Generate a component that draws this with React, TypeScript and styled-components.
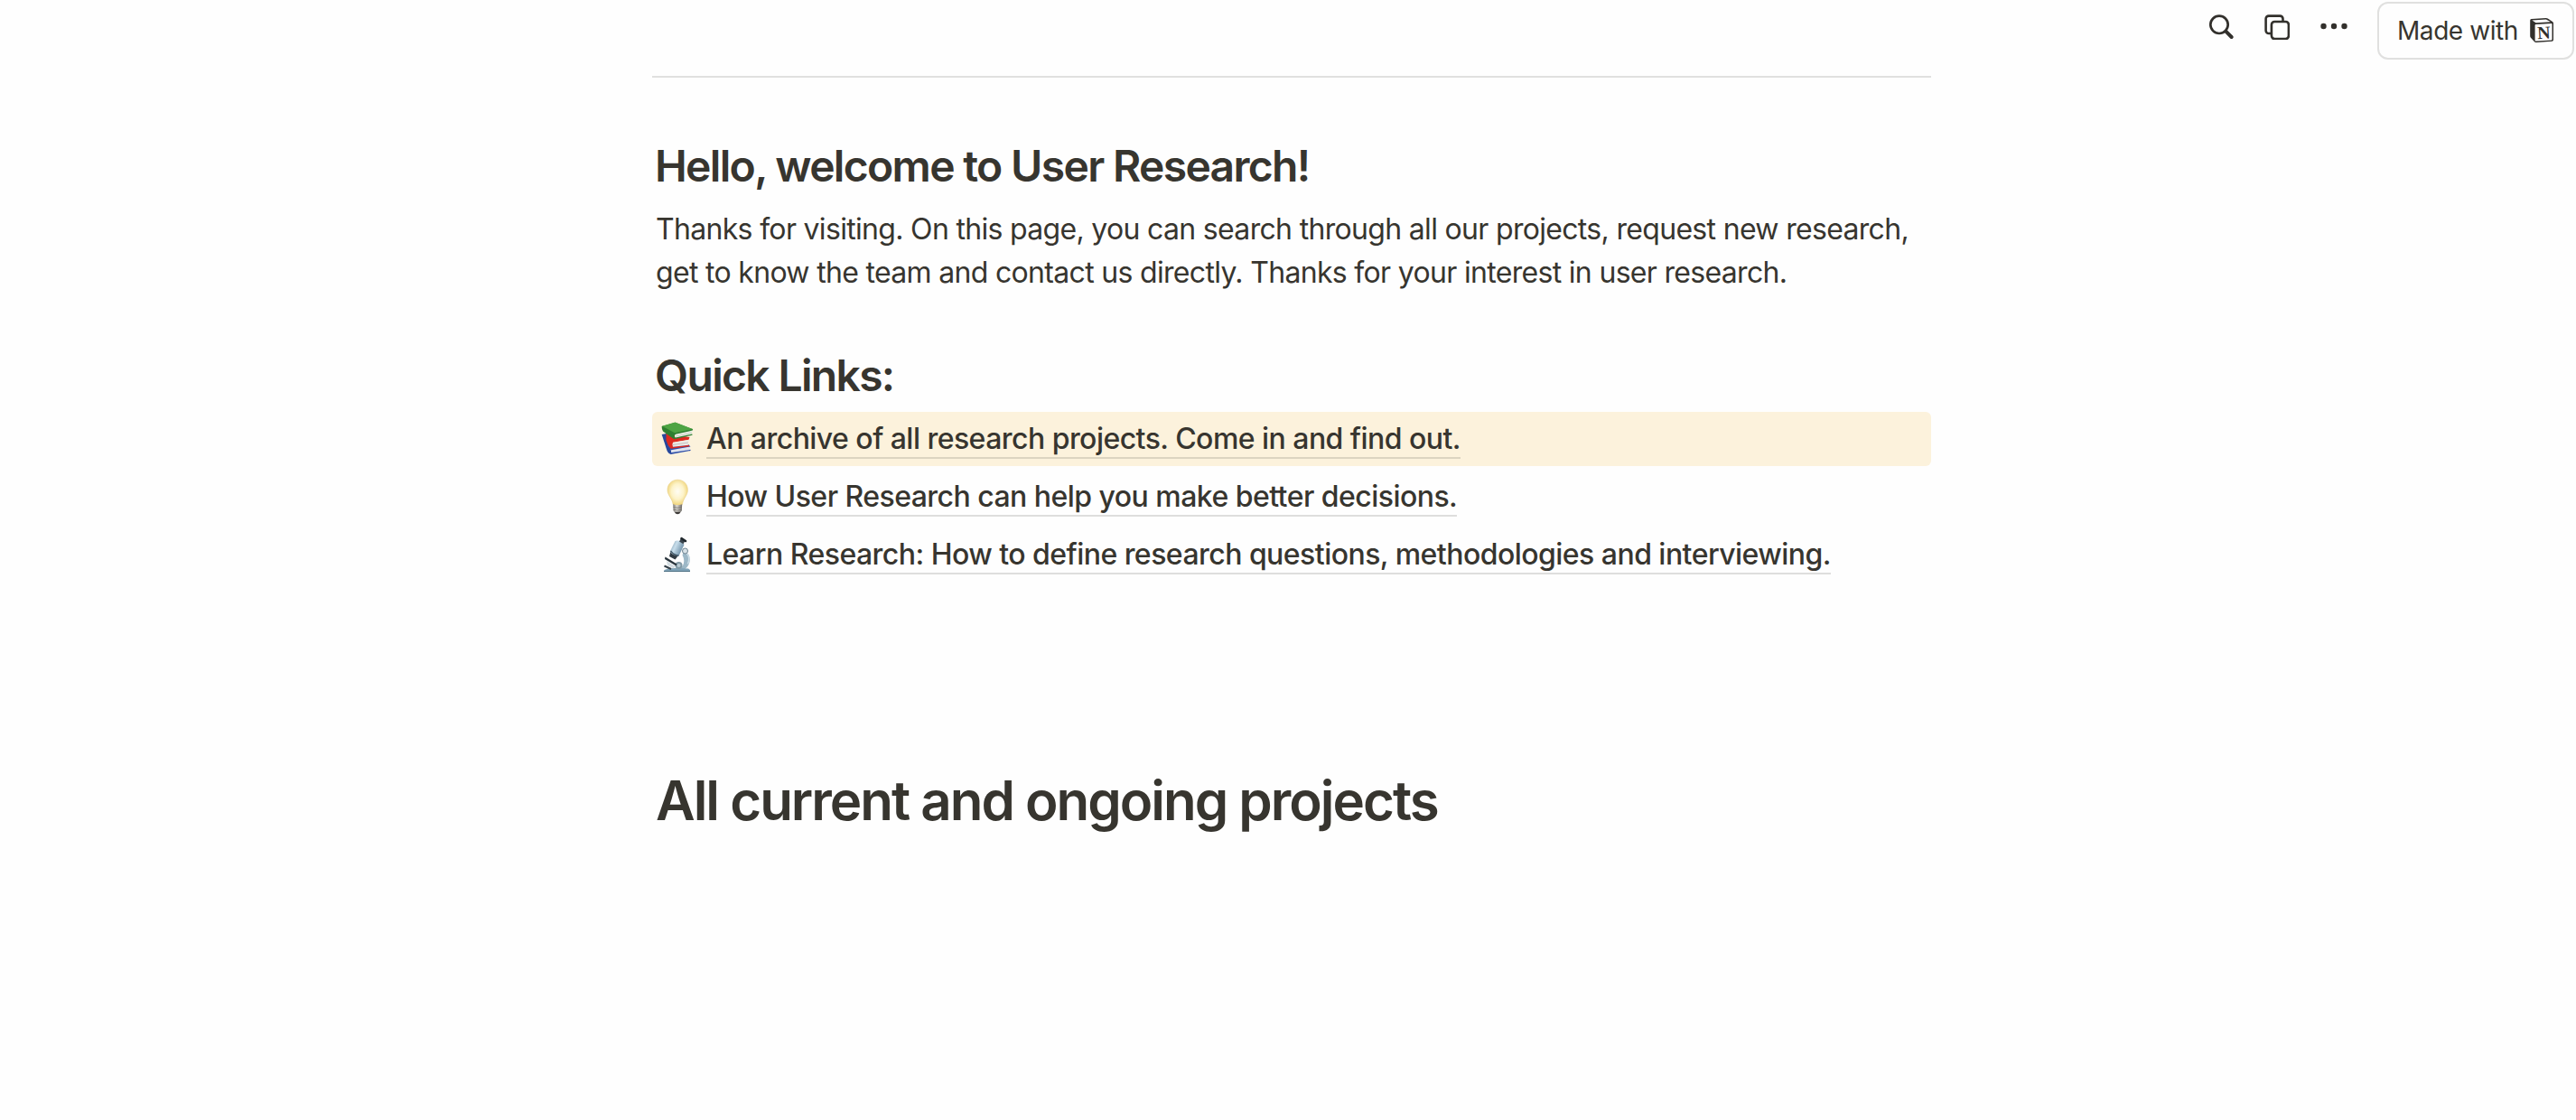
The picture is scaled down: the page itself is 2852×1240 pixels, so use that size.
import { FC } from 'react';
import styled, { createGlobalStyle } from 'styled-components';

interface IQuickLink {
  label: string;
  icon: FC;
  highlighted?: boolean;
}

const colors = {
  TEXT: '#37352f',
  ICON: '#32302c',
  BORDER: '#e0e0df',
  UNDERLINE: 'rgba(55, 53, 47, 0.16)',
  YELLOW: '#fcf2dc',
  WHITE: '#fefefe',
};

const GlobalStyle = createGlobalStyle`
  body {
    margin: 0;
    font-family: Inter, 'Liberation Sans', sans-serif;
    color: ${colors.TEXT};
    background: ${colors.WHITE};
  }
`;

const Page = styled.div`
  min-height: 1240px;
`;

const TopBar = styled.header`
  box-sizing: border-box;
  display: flex;
  justify-content: flex-end;
  align-items: flex-start;
  height: 84px;
  padding: 2px 2px 0 0;
`;

const Actions = styled.div`
  display: flex;
  align-items: center;
  gap: 34px;
  height: 56px;
  margin-right: 33px;
`;

const ActionButton = styled.button`
  display: flex;
  padding: 0;
  border: 0;
  background: none;
  color: ${colors.ICON};
`;

const MadeWith = styled.a`
  box-sizing: border-box;
  display: flex;
  align-items: center;
  gap: 12px;
  width: 218px;
  height: 64px;
  padding-left: 20px;
  border: 2px solid ${colors.BORDER};
  border-radius: 12px;
  font-size: 28px;
  letter-spacing: -0.44px;
  white-space: nowrap;
`;

const Content = styled.main`
  width: 1416px;
  margin-left: 722px;
`;

const Divider = styled.hr`
  height: 2px;
  margin: 0;
  border: 0;
  background: ${colors.BORDER};
`;

const Heading = styled.h2<{ $top: number }>`
  margin: ${({ $top }) => $top}px 0 0 3px;
  font-size: 48px;
  font-weight: 600;
  line-height: 62px;
  letter-spacing: -1.67px;
`;

const Text = styled.p`
  margin: 15px 0 0;
  padding: 0 4px;
  font-size: 32px;
  line-height: 48px;
  letter-spacing: -0.68px;
`;

const LinkList = styled.div`
  display: flex;
  flex-direction: column;
  gap: 4px;
  margin-top: 9px;
`;

const LinkRow = styled.div<{ $highlighted?: boolean }>`
  display: flex;
  align-items: center;
  gap: 12px;
  height: 60px;
  padding-left: 8px;
  border-radius: 6px;
  background: ${({ $highlighted }) => ($highlighted ? colors.YELLOW : 'none')};
`;

const LinkText = styled.a`
  padding-top: 2px;
  border-bottom: 2px solid ${colors.UNDERLINE};
  font-size: 32px;
  font-weight: 500;
  line-height: 40px;
  letter-spacing: -0.54px;
  white-space: nowrap;
`;

const Title = styled.h1`
  margin: 203px 0 0 4px;
  font-size: 60px;
  font-weight: 600;
  line-height: 78px;
  letter-spacing: -2px;
`;

const SearchIcon: FC = () => (
  <svg width="28" height="28" viewBox="0 0 28 28" fill="none" stroke="currentColor">
    <circle cx="12" cy="11.3" r="9.7" strokeWidth="2.7" />
    <path d="M19.3 18.7 L25.6 25" strokeWidth="4" strokeLinecap="round" />
  </svg>
);

const CopyIcon: FC = () => (
  <svg width="28" height="28" viewBox="0 0 28 28" fill="none" stroke="currentColor" strokeWidth="2.6">
    <path d="M7.5 21 H4.8 A3.2 3.2 0 0 1 1.6 17.8 V4.8 A3.2 3.2 0 0 1 4.8 1.6 H17.3 A3.2 3.2 0 0 1 20.5 4.8 V7.5" />
    <rect x="7.9" y="8" width="19" height="19" rx="3.4" />
  </svg>
);

const MoreIcon: FC = () => (
  <svg width="30" height="28" viewBox="0 0 30 28" fill="currentColor">
    <circle cx="3.5" cy="13" r="3.2" />
    <circle cx="15" cy="13" r="3.2" />
    <circle cx="26.5" cy="13" r="3.2" />
  </svg>
);

const NotionLogo: FC = () => (
  <svg width="28" height="30" viewBox="0 0 28 30">
    <path
      d="M1.2 3.6 Q1.2 2.3 2.6 2.1 L18.6 1 Q19.8 0.9 20.8 1.6 L26 5 Q27 5.7 27 6.8 V25 Q27 26.700 25.4 26.8 L8 28.1 Q6.6 28.2 5.8 27.1 L1.7 22.4 Q1.2 21.8 1.2 20.8 Z"
      fill={colors.ICON}
    />
    <path d="M3.4 3.6 L18.9 2.5 L23.9 5.2 L7.6 6.3 Z" fill={colors.WHITE} />
    <path d="M6.6 8.9 Q6.6 8.2 7.4 8.1 L24.8 6.9 Q25.5 6.9 25.5 7.6 V24.6 Q25.5 25.3 24.8 25.4 L7.4 26.6 Q6.6 26.6 6.6 25.8 Z" fill={colors.WHITE} />
    <text
      x="16.1"
      y="23.8"
      textAnchor="middle"
      fontFamily="'Liberation Serif', serif"
      fontSize="20"
      fontWeight="700"
      fill={colors.ICON}
      transform="rotate(-3 16 17)"
    >
      N
    </text>
  </svg>
);

const BooksIcon: FC = () => (
  <svg width="40" height="40" viewBox="0 0 40 40">
    {/* blue book */}
    <path d="M2.7 15 L8 14 L14 31 L13 36.800 Q10 36.500 8.500 33 Z" fill="#27479c" />
    <path d="M12.500 31.500 L33 28 L34 32.500 L13.500 35.800 Z" fill="#dfe3ee" />
    <path d="M8 27 L32 26 L34.500 28.500 L13 32.300 Z" fill="#2c4da8" />
    <path d="M12 35.200 L34.500 31.800 V33 L12.500 37 Z" fill="#2c4da8" />
    {/* red book */}
    <path d="M7.5 14 L33.500 18 L32.500 20.800 L15 23.800 V28.700 L33 26.700 V28.200 L12.500 30.800 Q9 27 7.500 21.500 Z" fill="#dc2a20" />
    <path d="M15 24 L32.500 20.900 L32 26.800 L15 28.700 Q13.500 26.500 15 24 Z" fill="#eceae6" />
    <path d="M15 26.500 L32 24" stroke="#b9aead" strokeWidth="0.700" />
    {/* green book */}
    <path d="M16.500 14.500 L36.500 10 L35.800 15.200 L17.500 19.200 Z" fill="#eef0e8" />
    <path d="M2.7 6 L17.500 1.800 L37.200 9.200 L36.700 10.600 L18 14.700 Q15.500 16.700 17.800 18.600 L36.300 14.600 L36.500 15.700 L16.500 20.200 Q12 17.500 4 11.500 Q2.500 9 2.700 6 Z" fill="#2e7f31" />
    <path d="M3 5.800 L17.500 1.600 L37 9.100 L17 13.300 Z" fill="#4da443" />
    <path d="M18 17 L35.800 13" stroke="#b4bfae" strokeWidth="0.700" />
  </svg>
);

const BulbIcon: FC = () => (
  <svg width="40" height="40" viewBox="0 0 40 40">
    <defs>
      <radialGradient id="bulb" cx="50%" cy="46%" r="55%">
        <stop offset="0" stopColor="#fffdf4" />
        <stop offset="0.55" stopColor="#fdf3c8" />
        <stop offset="1" stopColor="#efd274" />
      </radialGradient>
      <linearGradient id="bulbBase">
        <stop offset="0" stopColor="#77746f" />
        <stop offset="0.4" stopColor="#dedbd5" />
        <stop offset="1" stopColor="#6b6864" />
      </linearGradient>
    </defs>
    <path
      d="M20.200 1.200 C27 1.200 31.400 6.200 31.400 12.400 C31.400 18.500 26.300 21.500 25.400 28.600 Q20.200 30.400 15.200 28.600 C14.300 21.500 9 18.500 9 12.400 C9 6.200 13.500 1.200 20.200 1.200 Z"
      fill="url(#bulb)"
      stroke="#e7cf86"
      strokeWidth="0.6"
    />
    <path d="M15.200 28.300 Q20.200 30 25.200 28.300 L24.800 35.600 L22.600 38.300 Q20.200 39.800 17.700 38.300 L15.600 35.600 Z" fill="url(#bulbBase)" />
    <path d="M15.500 31.500 Q20 33 25 31.500 M15.600 34.200 Q20 35.800 24.800 34.200" fill="none" stroke="#75716b" strokeWidth="0.8" />
    <path d="M17 36.800 H23.400 L22.300 38.600 Q20.200 39.800 18 38.600 Z" fill="#3c3937" />
  </svg>
);

const MicroscopeIcon: FC = () => (
  <svg width="40" height="40" viewBox="0 0 40 40">
    <defs>
      <linearGradient id="tube" x1="0" y1="0" x2="1" y2="0.5">
        <stop offset="0" stopColor="#6d8ca0" />
        <stop offset="0.45" stopColor="#c8deeb" />
        <stop offset="1" stopColor="#6487a0" />
      </linearGradient>
    </defs>
    {/* arm and foot */}
    <path d="M27.500 16 Q36 20 33 30 Q31 35 26 37.500 L21.500 37.500 Q30.500 30 25.500 20.500 Z" fill="#9db8c7" />
    <path d="M29 17.500 Q35 22 31.500 30.500" fill="none" stroke="#cbdce5" strokeWidth="1.500" />
    <path d="M5.500 37 Q10 34.600 18 35 L32 35.500 L34 37 V39 H5 Z" fill="#7fa2b6" />
    <path d="M5 38.500 H34" stroke="#4f7185" strokeWidth="1" />
    <circle cx="21.500" cy="32" r="4" fill="#8199a5" />
    <circle cx="21.500" cy="32" r="2" fill="#b8c9d2" />
    {/* stage */}
    <path d="M6.500 22.500 L19.500 30.500 L18.500 32.500 L6 25 Z" fill="#29343c" />
    <path d="M8 27 L9 32 L16 35.500 L17.500 33 Z" fill="#d4dde2" />
    <path d="M5.500 32.500 L13 36" stroke="#364149" strokeWidth="2" />
    {/* tube */}
    <path d="M12.500 16.500 L21 21 L17.500 25.500 L11 22 Z" fill="#303a42" />
    <path d="M17.500 5 Q22.500 3.200 27.500 9 L21.500 21.500 Q15 21.500 11.800 16.500 Z" fill="url(#tube)" />
    <path d="M12.500 15.800 Q16 20.500 21.500 21.200" fill="none" stroke="#3c5262" strokeWidth="1.300" />
    <path d="M22 5.500 L24 2 L28.500 4.800 L26.500 8.300 Z" fill="#39444d" />
    <path d="M24.500 2.200 L29 5" stroke="#20272c" strokeWidth="2.600" strokeLinecap="round" />
    <circle cx="28.500" cy="16" r="3" fill="#d8e2e7" stroke="#6c8290" strokeWidth="1" />
  </svg>
);

const quickLinks: IQuickLink[] = [
  {
    label: 'An archive of all research projects. Come in and find out.',
    icon: BooksIcon,
    highlighted: true,
  },
  {
    label: 'How User Research can help you make better decisions.',
    icon: BulbIcon,
  },
  {
    label: 'Learn Research: How to define research questions, methodologies and interviewing.',
    icon: MicroscopeIcon,
  },
];

const App: FC = () => (
  <Page>
    <GlobalStyle />
    <TopBar>
      <Actions>
        <ActionButton aria-label="Search">
          <SearchIcon />
        </ActionButton>
        <ActionButton aria-label="Duplicate">
          <CopyIcon />
        </ActionButton>
        <ActionButton aria-label="More">
          <MoreIcon />
        </ActionButton>
      </Actions>
      <MadeWith>
        Made with
        <NotionLogo />
      </MadeWith>
    </TopBar>
    <Content>
      <Divider />
      <Heading $top={67}>Hello, welcome to User Research!</Heading>
      <Text>
        Thanks for visiting. On this page, you can search through all our projects, request new
        research, get to know the team and contact us directly. Thanks for your interest in user
        research.
      </Text>
      <Heading $top={59}>Quick Links:</Heading>
      <LinkList>
        {quickLinks.map(({ label, icon: Icon, highlighted }) => (
          <LinkRow key={label} $highlighted={highlighted}>
            <Icon />
            <LinkText>{label}</LinkText>
          </LinkRow>
        ))}
      </LinkList>
      <Title>All current and ongoing projects</Title>
    </Content>
  </Page>
);

export default App;
